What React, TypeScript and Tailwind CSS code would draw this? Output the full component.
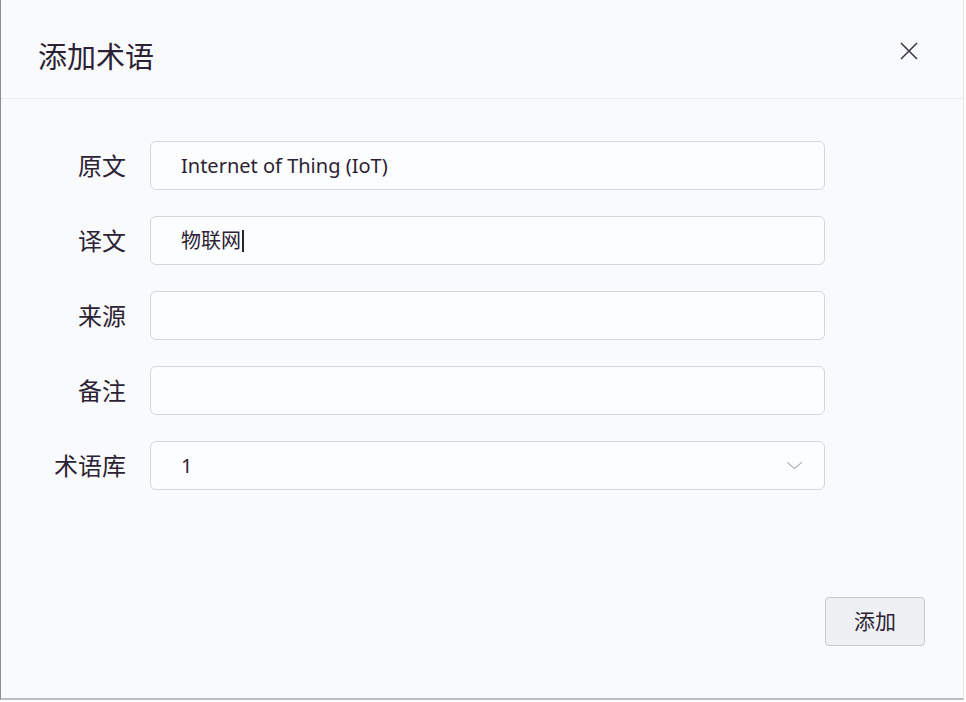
const font = {
  fontFamily: '"Noto Sans", "Noto Sans CJK SC", sans-serif',
}

function Field({ label, value, select }: { label: string; value?: string; select?: boolean }) {
  return (
    <div className="flex items-center gap-[24px]">
      <div className="w-[102px] text-right text-[24px] leading-none text-[#2b2233]">{label}</div>
      <div className="flex h-[49px] w-[675px] items-center justify-between rounded-[6px] border border-[#d3d7de] bg-[#fcfdfe] pl-[30px] pr-[22px]">
        <span className="flex items-center text-[20px] text-[#2b2233]">
          {value}
          {label === "译文" && <span className="ml-[1px] inline-block h-[22px] w-[1.5px] bg-[#2b2233]" />}
        </span>
        {select && (
          <svg width="17" height="9" viewBox="0 0 18 10" fill="none" className="mr-[-1px]">
            <path d="M1 1.5L9 8.5L17 1.5" stroke="#a3a8b2" strokeWidth="1.2" />
          </svg>
        )}
      </div>
    </div>
  )
}

export default function App() {
  return (
    <div style={font} className="h-[702px] w-[966px] bg-white">
      <div className="flex h-[700px] w-[964px] flex-col border-b-2 border-l border-r border-b-[#b9bcc2] border-l-[#8a8d94] border-r-[#e4e6ea] bg-[#f9fafc]">
        {/* Header */}
        <div className="flex h-[99px] items-center justify-between border-b border-[#e8ebef] pl-[37px] pr-[45px] pt-[16px]">
          <h1 className="text-[29px] font-normal text-[#2b2233]">添加术语</h1>
          <svg width="18" height="18" viewBox="0 0 18 18" fill="none" className="mb-[12px]">
            <path d="M1 1L17 17M17 1L1 17" stroke="#3a3244" strokeWidth="1.5" />
          </svg>
        </div>

        {/* Form */}
        <div className="flex flex-col gap-[26px] pl-[23px] pt-[42px]">
          <Field label="原文" value="Internet of Thing (IoT)" />
          <Field label="译文" value="物联网" />
          <Field label="来源" />
          <Field label="备注" />
          <Field label="术语库" value="1" select />
        </div>

        <div className="flex flex-1 items-end justify-end pb-[52px] pr-[38px]">
          <button className="h-[49px] w-[100px] rounded-[4px] border border-[#c4c8cf] bg-[#eef0f4] text-[21px] text-[#2b2233]">
            添加
          </button>
        </div>
      </div>
    </div>
  )
}
